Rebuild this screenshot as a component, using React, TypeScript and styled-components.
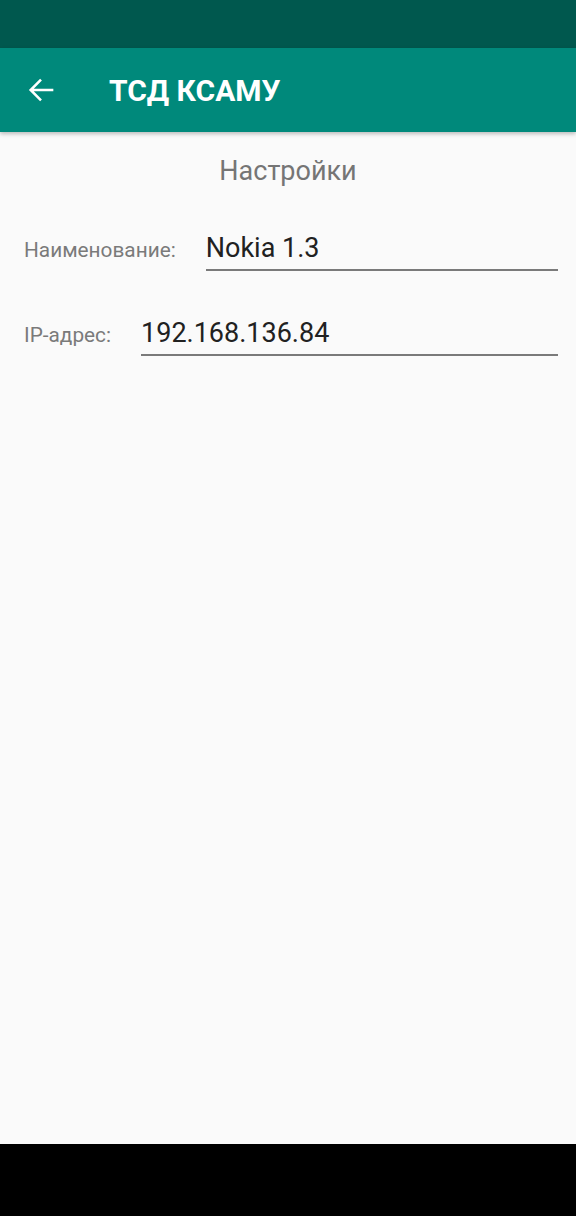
import React from 'react'
import styled, { createGlobalStyle } from 'styled-components'

const GlobalStyle = createGlobalStyle`
  html, body {
    margin: 0;
    padding: 0;
    background: #000;
  }
  body {
    font-family: Roboto, "Noto Sans", "Liberation Sans", sans-serif;
  }
`

const Screen = styled.div`
  width: 576px;
  height: 1216px;
  display: flex;
  flex-direction: column;
  background: #fafafa;
  overflow: hidden;
`

const StatusBar = styled.div`
  height: 48px;
  flex-shrink: 0;
  background: #00584e;
`

const Toolbar = styled.header`
  height: 84px;
  flex-shrink: 0;
  display: flex;
  align-items: center;
  background: #00897b;
  box-shadow: 0 2px 4px rgba(0, 0, 0, 0.25);
  position: relative;
  z-index: 1;
`

const BackButton = styled.button`
  width: 84px;
  height: 84px;
  display: flex;
  align-items: center;
  justify-content: center;
  padding: 0;
  border: none;
  background: transparent;
  color: #fff;
`

const Title = styled.h1`
  margin: 0 0 0 25px;
  font-size: 30px;
  font-weight: 700;
  color: #fff;
`

const Content = styled.main`
  flex: 1;
  display: flex;
  flex-direction: column;
  padding: 0 18px 0 24px;
`

const Heading = styled.h2`
  margin: 22px 0 0 0;
  padding-right: 6px;
  text-align: center;
  font-size: 27px;
  font-weight: 400;
  color: #757575;
  line-height: 34px;
`

const Row = styled.div<{ $top: number }>`
  display: flex;
  align-items: baseline;
  gap: 30px;
  margin-top: ${(p) => p.$top}px;
`

const Label = styled.label`
  font-size: 20.8px;
  color: #7a7a7a;
  white-space: nowrap;
`

const Field = styled.input`
  flex: 1;
  min-width: 0;
  border: none;
  border-bottom: 2px solid #7a7a7a;
  background: transparent;
  font-family: inherit;
  font-size: 27px;
  color: #212121;
  padding: 0 0 5px 0;
  height: 32px;
  line-height: 32px;
  box-sizing: content-box;
  outline: none;
`

const NavBar = styled.div`
  height: 72px;
  flex-shrink: 0;
  background: #000;
`

const ArrowIcon = () => (
  <svg width="34" height="34" viewBox="0 0 24 24" fill="none">
    <path d="M20 12H4.7M11.3 4.7 4 12l7.3 7.3" stroke="#fff" strokeWidth="1.8" />
  </svg>
)

const App: React.FC = () => {
  return (
    <>
      <GlobalStyle />
      <Screen>
        <StatusBar />
        <Toolbar>
          <BackButton aria-label="Назад">
            <ArrowIcon />
          </BackButton>
          <Title>ТСД КСАМУ</Title>
        </Toolbar>
        <Content>
          <Heading>Настройки</Heading>
          <Row $top={44}>
            <Label>Наименование:</Label>
            <Field defaultValue="Nokia 1.3" />
          </Row>
          <Row $top={46}>
            <Label>IP-адрес:</Label>
            <Field defaultValue="192.168.136.84" />
          </Row>
        </Content>
        <NavBar />
      </Screen>
    </>
  )
}

export default App
